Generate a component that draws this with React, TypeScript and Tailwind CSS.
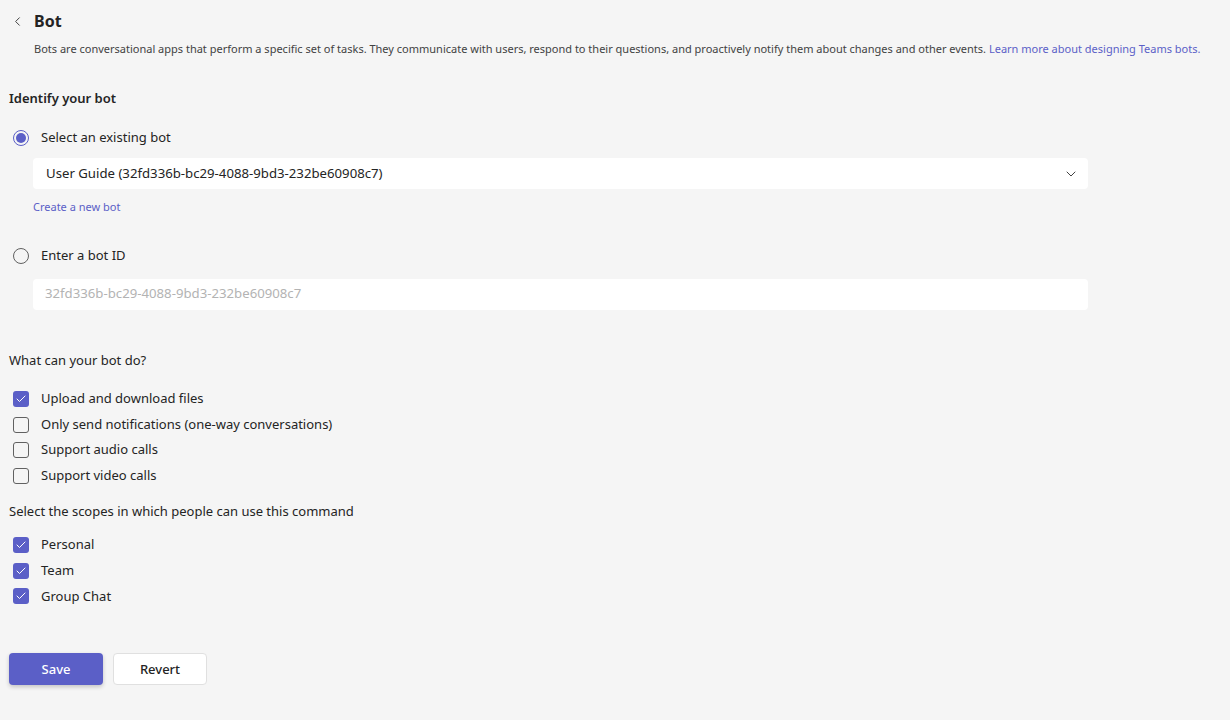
import { ChevronLeft, ChevronDown, Check } from 'lucide-react';

const capabilities = [
    { label: 'Upload and download files', checked: true },
    { label: 'Only send notifications (one-way conversations)', checked: false },
    { label: 'Support audio calls', checked: false },
    { label: 'Support video calls', checked: false },
];

const scopes = [
    { label: 'Personal', checked: true },
    { label: 'Team', checked: true },
    { label: 'Group Chat', checked: true },
];

function Checkbox({ label, checked }: { label: string; checked: boolean }) {
    return (
        <div className="flex items-center h-[25.7px]">
            <div className="w-[41px] flex items-center pl-[13px]">
                {checked ? (
                    <div className="w-4 h-4 rounded-[3px] bg-[#5b5fc7] flex items-center justify-center">
                        <Check className="w-3 h-3 text-white" strokeWidth={2} />
                    </div>
                ) : (
                    <div className="w-4 h-4 rounded-[3px] border border-[#616161]" />
                )}
            </div>
            <span className="text-[13px] text-[#242424]">{label}</span>
        </div>
    );
}

function Radio({ label, selected }: { label: string; selected: boolean }) {
    return (
        <div className="flex items-center h-6">
            <div className="w-[41px] flex items-center pl-[13px]">
                {selected ? (
                    <div className="w-4 h-4 rounded-full border border-[#5b5fc7] flex items-center justify-center">
                        <div className="w-[10px] h-[10px] rounded-full bg-[#5b5fc7]" />
                    </div>
                ) : (
                    <div className="w-4 h-4 rounded-full border border-[#616161]" />
                )}
            </div>
            <span className="text-[13px] text-[#242424]">{label}</span>
        </div>
    );
}

export default function App() {
    return (
        <div
            className="min-h-[720px] w-full bg-[#f5f5f5] text-[#242424]"
            style={{ fontFamily: '"Noto Sans", "Open Sans", sans-serif' }}
        >
            <div className="pt-[9px] w-[1088px]">
                {/* Header */}
                <div className="flex items-center h-6 pl-[10px]">
                    <ChevronLeft className="w-[15px] h-[15px] text-[#424242]" strokeWidth={1.6} />
                    <h1 className="ml-[9px] text-[16px] font-bold">Bot</h1>
                </div>
                <p className="ml-[34px] mt-[8px] text-[11px] text-[#424242] whitespace-nowrap">
                    Bots are conversational apps that perform a specific set of tasks. They communicate with users, respond to their questions, and proactively notify them about changes and other events.{' '}
                    <span className="text-[#5b5fc7]">Learn more about designing Teams bots.</span>
                </p>

                {/* Identify */}
                <h2 className="ml-[9px] mt-[31px] text-[13px] font-semibold">Identify your bot</h2>
                <div className="mt-[18px]">
                    <Radio label="Select an existing bot" selected />
                </div>
                <div className="ml-[33px] mt-[8px] h-[31px] bg-white rounded-[4px] flex items-center justify-between pl-[13px] pr-[9px]">
                    <span className="text-[13.2px] text-[#242424]">User Guide (32fd336b-bc29-4088-9bd3-232be60908c7)</span>
                    <ChevronDown className="w-4 h-4 text-[#424242]" strokeWidth={1.5} />
                </div>
                <p className="ml-[33px] mt-[10px] text-[11px] text-[#5b5fc7]">Create a new bot</p>

                <div className="mt-[28px]">
                    <Radio label="Enter a bot ID" selected={false} />
                </div>
                <div className="ml-[33px] mt-[11px] h-[31px] bg-white rounded-[4px] flex items-center pl-[12px]">
                    <span className="text-[13.2px] text-[#b3b3b3]">32fd336b-bc29-4088-9bd3-232be60908c7</span>
                </div>

                {/* Capabilities */}
                <h2 className="ml-[9px] mt-[41px] text-[13px]">What can your bot do?</h2>
                <div className="mt-[16px]">
                    {capabilities.map((c) => (
                        <Checkbox key={c.label} label={c.label} checked={c.checked} />
                    ))}
                </div>

                {/* Scopes */}
                <h2 className="ml-[9px] mt-[13px] text-[13px]">Select the scopes in which people can use this command</h2>
                <div className="mt-[11px]">
                    {scopes.map((s) => (
                        <Checkbox key={s.label} label={s.label} checked={s.checked} />
                    ))}
                </div>

                {/* Actions */}
                <div className="ml-[9px] mt-[44px] flex gap-[10px]">
                    <button className="w-[94px] h-[32px] rounded-[4px] bg-[#5b5fc7] text-white text-[13px] font-medium shadow-[0_2px_4px_rgba(0,0,0,0.2)]">
                        Save
                    </button>
                    <button className="w-[94px] h-[32px] rounded-[4px] bg-white border border-[#e0e0e0] text-[#242424] text-[13px] font-medium">
                        Revert
                    </button>
                </div>
            </div>
        </div>
    );
}
